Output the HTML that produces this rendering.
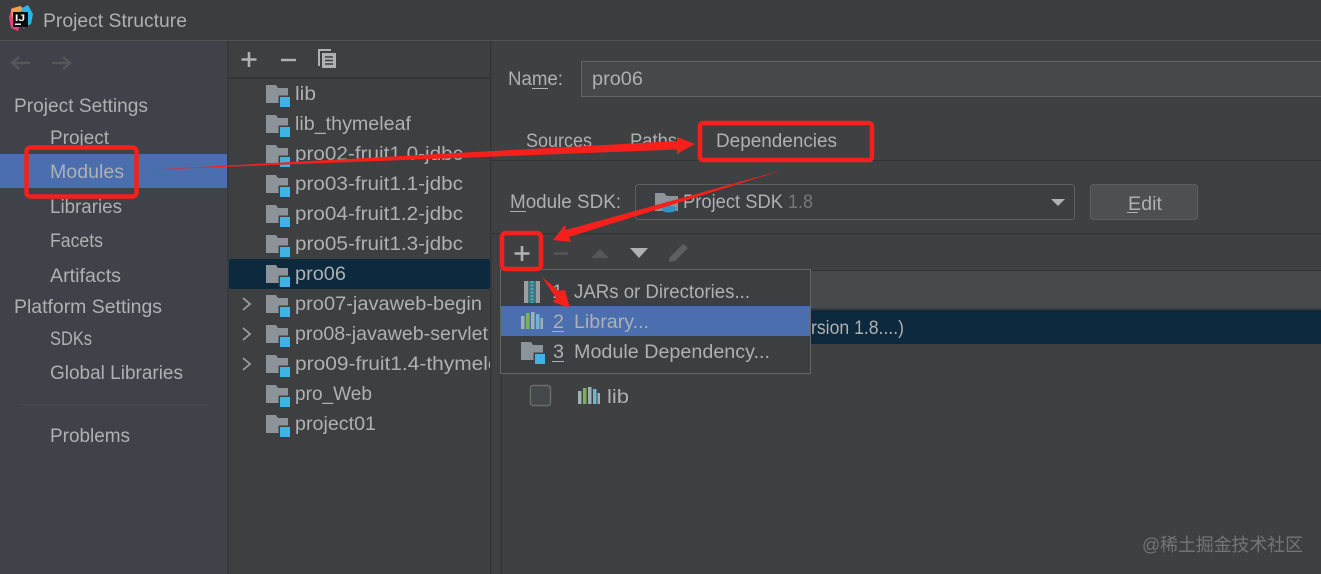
<!DOCTYPE html>
<html><head><meta charset="utf-8"><style>
html,body{margin:0;padding:0;background:#3f4041;width:1321px;height:574px;overflow:hidden}
svg{display:block}
text{font-family:"Liberation Sans","Noto Sans CJK SC",sans-serif;font-size:19px;fill:#aeb0b2}
</style></head><body>
<svg xmlns="http://www.w3.org/2000/svg" width="1321" height="574" viewBox="0 0 1321 574">
<defs>
<g id="mod"><path d="M0 0h10l2 3h10v15H0z" fill="#8c9499"/><rect x="12.500" y="10.500" width="11.500" height="11.500" fill="#3f4041"/><rect x="14" y="12" width="10" height="10" fill="#3db3e6"/></g>
<g id="lib"><rect x="0" y="4" width="3.500" height="13" fill="#9db0b3"/><rect x="5" y="1" width="3.500" height="16" fill="#7cb05c"/><rect x="10" y="0" width="3.500" height="17" fill="#9db0b3"/><rect x="15" y="2" width="3.500" height="15" fill="#6fb4d4"/><rect x="19.500" y="6" width="2.500" height="11" fill="#9db0b3"/></g>
<clipPath id="treeclip"><rect x="229" y="80" width="261" height="400"/></clipPath>
</defs>
<rect width="1321" height="574" fill="#3f4041"/>
<rect width="1321" height="40" fill="#3c3d3f"/>
<rect y="40" width="1321" height="1" fill="#515254"/>
<rect x="0" y="41" width="227" height="533" fill="#3f4349"/>
<rect x="229" y="41" width="261" height="533" fill="#3e3f40"/>
<rect x="227" y="41" width="2" height="533" fill="#38393a"/>
<rect x="490" y="41" width="1.500" height="533" fill="#343536"/>
<rect x="229" y="77" width="261" height="2" fill="#343536"/>

<!-- logo -->
<path d="M12 8l9-2 4 6-7 19-7-3-2-11z" fill="#e8407e"/>
<path d="M11 9l9-3 4 3-12 9z" fill="#f0a040"/>
<path d="M22 8l6-3 5 9-2 10-8 4z" fill="#28b5e8"/>
<rect x="13" y="12" width="15" height="15" fill="#0c0c0c"/>
<text x="15" y="21" style="font-size:9px;font-weight:bold;fill:#fff" textLength="10" lengthAdjust="spacingAndGlyphs">IJ</text>
<rect x="15" y="23.500" width="6" height="1.500" fill="#eee"/>
<text x="43" y="27" textLength="144" lengthAdjust="spacingAndGlyphs">Project Structure</text>

<!-- nav arrows -->
<path d="M30 63H12m7-6l-7 6 7 6" fill="none" stroke="#55585b" stroke-width="2.400"/>
<path d="M52 63h18m-7-6l7 6-7 6" fill="none" stroke="#55585b" stroke-width="2.400"/>

<!-- sidebar -->
<rect x="0" y="154" width="227" height="34" fill="#4b6eaf"/>
<text x="14" y="112" textLength="134" lengthAdjust="spacingAndGlyphs">Project Settings</text>
<text x="50" y="144" textLength="59" lengthAdjust="spacingAndGlyphs">Project</text>
<text x="50" y="178" textLength="74" lengthAdjust="spacingAndGlyphs">Modules</text>
<text x="50" y="213" textLength="72" lengthAdjust="spacingAndGlyphs">Libraries</text>
<text x="50" y="247" textLength="53" lengthAdjust="spacingAndGlyphs">Facets</text>
<text x="50" y="282" textLength="71" lengthAdjust="spacingAndGlyphs">Artifacts</text>
<text x="14" y="313" textLength="148" lengthAdjust="spacingAndGlyphs">Platform Settings</text>
<text x="50" y="345" textLength="42" lengthAdjust="spacingAndGlyphs">SDKs</text>
<text x="50" y="379" textLength="133" lengthAdjust="spacingAndGlyphs">Global Libraries</text>
<rect x="20" y="404" width="188" height="1" fill="#474b51"/>
<text x="50" y="442" textLength="80" lengthAdjust="spacingAndGlyphs">Problems</text>

<!-- tree toolbar -->
<path d="M249 52v15M241.500 59.500h15" stroke="#afb1b3" stroke-width="2.600" fill="none"/>
<path d="M281 60h15" stroke="#afb1b3" stroke-width="2.400" fill="none"/>
<path d="M319 66V50h12" fill="none" stroke="#afb1b3" stroke-width="2"/>
<rect x="322" y="53" width="14" height="15" fill="#afb1b3"/>
<path d="M325 57h8M325 60.500h8M325 64h8" stroke="#3e3f40" stroke-width="1.400"/>

<!-- tree -->
<rect x="229" y="259" width="261" height="30" rx="2" fill="#0d293e"/>
<g clip-path="url(#treeclip)">
<use href="#mod" x="266" y="85"/><text x="295" y="100" textLength="21" lengthAdjust="spacingAndGlyphs">lib</text>
<use href="#mod" x="266" y="115"/><text x="295" y="130" textLength="116" lengthAdjust="spacingAndGlyphs">lib_thymeleaf</text>
<use href="#mod" x="266" y="145"/><text x="295" y="160" textLength="168" lengthAdjust="spacingAndGlyphs">pro02-fruit1.0-jdbc</text>
<use href="#mod" x="266" y="175"/><text x="295" y="190" textLength="168" lengthAdjust="spacingAndGlyphs">pro03-fruit1.1-jdbc</text>
<use href="#mod" x="266" y="205"/><text x="295" y="220" textLength="168" lengthAdjust="spacingAndGlyphs">pro04-fruit1.2-jdbc</text>
<use href="#mod" x="266" y="235"/><text x="295" y="250" textLength="168" lengthAdjust="spacingAndGlyphs">pro05-fruit1.3-jdbc</text>
<use href="#mod" x="266" y="265"/><text x="295" y="280" textLength="51" lengthAdjust="spacingAndGlyphs">pro06</text>
<use href="#mod" x="266" y="295"/><text x="295" y="310" textLength="187" lengthAdjust="spacingAndGlyphs">pro07-javaweb-begin</text>
<use href="#mod" x="266" y="325"/><text x="295" y="340" textLength="193" lengthAdjust="spacingAndGlyphs">pro08-javaweb-servlet</text>
<use href="#mod" x="266" y="355"/><text x="295" y="370" textLength="222" lengthAdjust="spacingAndGlyphs">pro09-fruit1.4-thymeleaf</text>
<use href="#mod" x="266" y="385"/><text x="295" y="400" textLength="77" lengthAdjust="spacingAndGlyphs">pro_Web</text>
<use href="#mod" x="266" y="415"/><text x="295" y="430" textLength="81" lengthAdjust="spacingAndGlyphs">project01</text>
</g>
<path d="M243 298l7 6-7 6M243 328l7 6-7 6M243 358l7 6-7 6" fill="none" stroke="#9a9c9e" stroke-width="1.800"/>

<!-- name -->
<text x="508" y="85" textLength="55" lengthAdjust="spacingAndGlyphs">Name:</text>
<rect x="532" y="88" width="16" height="1" fill="#aeb0b2"/>
<rect x="581.500" y="61.500" width="745" height="35" fill="#45494a" stroke="#646464"/>
<text x="592" y="85" textLength="51" lengthAdjust="spacingAndGlyphs">pro06</text>

<!-- tabs -->
<text x="526" y="147" textLength="66" lengthAdjust="spacingAndGlyphs">Sources</text>
<text x="630" y="147" textLength="47" lengthAdjust="spacingAndGlyphs">Paths</text>
<text x="716" y="147" textLength="121" lengthAdjust="spacingAndGlyphs">Dependencies</text>
<rect x="492" y="160" width="829" height="1" fill="#333435"/>

<!-- sdk -->
<text x="510" y="208" textLength="111" lengthAdjust="spacingAndGlyphs">Module SDK:</text>
<rect x="510" y="211" width="16" height="1" fill="#aeb0b2"/>
<rect x="635.500" y="184.500" width="439" height="35" rx="3" fill="#3c3f41" stroke="#5e6060"/>
<path d="M655 193h9l3 3h11v15h-23z" fill="#8c9499"/>
<ellipse cx="669" cy="209" rx="7.500" ry="3.500" fill="#3592c4"/>
<text x="683" y="208" textLength="100" lengthAdjust="spacingAndGlyphs">Project SDK</text>
<text x="788" y="208" textLength="25" lengthAdjust="spacingAndGlyphs" style="fill:#75787a">1.8</text>
<path d="M1051 199h14l-7 7z" fill="#afb1b3"/>
<rect x="1090.500" y="184.500" width="107" height="35" rx="3" fill="#4c5052" stroke="#5e6060"/>
<text x="1128" y="210" textLength="34" lengthAdjust="spacingAndGlyphs">Edit</text>
<rect x="1127" y="212" width="11" height="1" fill="#aeb0b2"/>
<rect x="492" y="233" width="829" height="1.500" fill="#333435"/>

<!-- dep toolbar -->
<path d="M522 246v15M514.500 253.500h15" stroke="#afb1b3" stroke-width="2.600" fill="none"/>
<path d="M554 253.500h14" stroke="#55585a" stroke-width="2.400" fill="none"/>
<path d="M591 258l9-9 9 9z" fill="#55585a"/>
<path d="M630 248h18l-9 10z" fill="#afb1b3"/>
<path d="M669 262l1-5 13-13 5 4-13 13z" fill="#5d6062"/>

<!-- table -->
<rect x="501" y="271" width="820" height="37" fill="#47494b"/>
<rect x="501" y="270" width="820" height="1" fill="#333435"/>
<rect x="501" y="308" width="820" height="2" fill="#3a3b3c"/>
<rect x="501" y="310" width="820" height="34" fill="#0d293e"/>
<text x="811" y="334" textLength="93" lengthAdjust="spacingAndGlyphs">rsion 1.8....)</text>
<rect x="500.500" y="373" width="1.500" height="201" fill="#333435"/>
<rect x="530.500" y="385.500" width="20" height="20" rx="2.500" fill="#43494a" stroke="#6b6b6b" stroke-width="1.400"/>
<use href="#lib" x="578" y="387"/>
<text x="607" y="403" textLength="22" lengthAdjust="spacingAndGlyphs">lib</text>

<!-- popup -->
<rect x="500.500" y="269.500" width="310" height="104" fill="#3c3f41" stroke="#646669"/>
<rect x="501" y="306" width="309" height="30" fill="#4b6eaf"/>
<rect x="524" y="281" width="16" height="22" fill="#9aa0a2"/>
<rect x="528" y="281" width="8" height="22" fill="#4f6f78"/>
<path d="M532 281v22" stroke="#2fb5c0" stroke-width="3" stroke-dasharray="2 1.500"/>
<text x="552" y="298" textLength="11" lengthAdjust="spacingAndGlyphs">1</text>
<text x="574" y="298" textLength="176" lengthAdjust="spacingAndGlyphs">JARs or Directories...</text>
<use href="#lib" x="521" y="312"/>
<text x="553" y="328" textLength="11" lengthAdjust="spacingAndGlyphs">2</text>
<rect x="552" y="331" width="12" height="1" fill="#aeb0b2"/>
<text x="574" y="328" textLength="75" lengthAdjust="spacingAndGlyphs">Library...</text>
<use href="#mod" x="521" y="342"/>
<text x="553" y="358" textLength="11" lengthAdjust="spacingAndGlyphs">3</text>
<rect x="552" y="361" width="12" height="1" fill="#aeb0b2"/>
<text x="574" y="358" textLength="196" lengthAdjust="spacingAndGlyphs">Module Dependency...</text>

<!-- watermark -->
<text x="1142" y="551" textLength="161" lengthAdjust="spacingAndGlyphs" style="font-size:18px;fill:#747577">@稀土掘金技术社区</text>

<!-- red annotations -->
<g fill="none" stroke="#f5201c" stroke-width="4.500">
<rect x="26.500" y="147.500" width="110" height="49" rx="4"/>
<rect x="700" y="123" width="172" height="37" rx="3"/>
<rect x="502" y="233" width="39" height="36" rx="4"/>
</g>
<g fill="#f5201c">
<path d="M145 170L677 141L677 137L695 144L677 154L677 149.500Z"/>
<path d="M783 170L566 230L565 225L553 240L571 242L569 237Z"/>
<path d="M542 277L559 291L565 290L570 308L553 302L556 298Z"/>
</g>
</svg>
</body></html>
